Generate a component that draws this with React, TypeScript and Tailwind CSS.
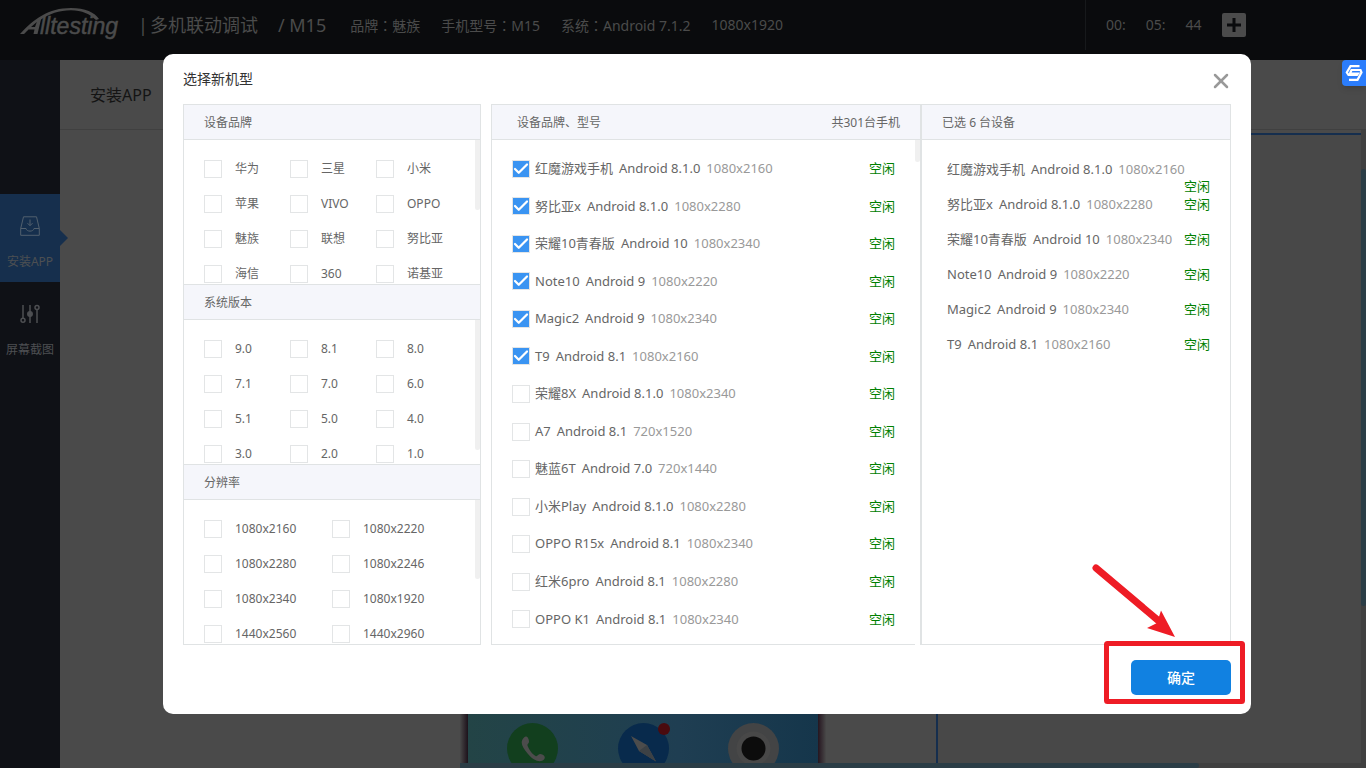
import { useState } from "react";
import { Check, X } from "lucide-react";

type Device = {
  name: string;
  system: string;
  resolution: string;
};

type FilterGroup = {
  title: string;
  options: string[];
  wide?: boolean;
  thumb: string;
};

const filterGroups: FilterGroup[] = [
  {
    title: "设备品牌",
    options: ["华为", "三星", "小米", "苹果", "VIVO", "OPPO", "魅族", "联想", "努比亚", "海信", "360", "诺基亚"],
    thumb: "h-[70px]",
  },
  {
    title: "系统版本",
    options: ["9.0", "8.1", "8.0", "7.1", "7.0", "6.0", "5.1", "5.0", "4.0", "3.0", "2.0", "1.0"],
    thumb: "h-[130px]",
  },
  {
    title: "分辨率",
    options: ["1080x2160", "1080x2220", "1080x2280", "1080x2246", "1080x2340", "1080x1920", "1440x2560", "1440x2960"],
    wide: true,
    thumb: "h-[79px]",
  },
];

const devices: Device[] = [
  { name: "红魔游戏手机", system: "Android 8.1.0", resolution: "1080x2160" },
  { name: "努比亚x", system: "Android 8.1.0", resolution: "1080x2280" },
  { name: "荣耀10青春版", system: "Android 10", resolution: "1080x2340" },
  { name: "Note10", system: "Android 9", resolution: "1080x2220" },
  { name: "Magic2", system: "Android 9", resolution: "1080x2340" },
  { name: "T9", system: "Android 8.1", resolution: "1080x2160" },
  { name: "荣耀8X", system: "Android 8.1.0", resolution: "1080x2340" },
  { name: "A7", system: "Android 8.1", resolution: "720x1520" },
  { name: "魅蓝6T", system: "Android 7.0", resolution: "720x1440" },
  { name: "小米Play", system: "Android 8.1.0", resolution: "1080x2280" },
  { name: "OPPO R15x", system: "Android 8.1", resolution: "1080x2340" },
  { name: "红米6pro", system: "Android 8.1", resolution: "1080x2280" },
  { name: "OPPO K1", system: "Android 8.1", resolution: "1080x2340" },
];

// The "A" is part of the swoosh, the rest of the name is set beside it.
function Logo() {
  return (
    <svg width="102" height="36" viewBox="0 0 102 36" role="img" aria-label="Alltesting">
      <path
        d="M0 27C14 12 28 1 51 1C65 1 75 5.500 79 12L76 13C70 7 62 3.200 51 3.200C39 3.200 29 7 21 12.500L17.500 27H13.500L14.500 22.500H8.500L4 27ZM11 20H15L16.800 15Z"
        fill="#4b4b4b"
      />
      <text
        x="20"
        y="27"
        fill="#4b4b4b"
        stroke="#4b4b4b"
        strokeWidth=".5"
        fontFamily="'Liberation Sans', sans-serif"
        fontSize="23"
        fontStyle="italic"
      >
        lltesting
      </text>
    </svg>
  );
}

// Full-width colon, set in the middle of its square.
function Colon() {
  return <span className="font-['Noto_Sans_CJK_TC',sans-serif]">：</span>;
}

function TopBar() {
  return (
    <header className="flex h-[60px] justify-between bg-[#0a0b0d] text-sm text-[#4b4b4b]">
      <div className="flex h-[50px] items-center pl-5">
        <Logo />
        <h1 className="ml-4 flex gap-5 text-lg whitespace-nowrap">
          <span className="flex">
            <span>|</span>
            <span className="ml-0.5">多机联动调试</span>
          </span>
          <span>/ M15</span>
        </h1>
        <div className="ml-6 flex gap-[21px] whitespace-nowrap">
          <span>品牌<Colon />魅族</span>
          <span>手机型号<Colon />M15</span>
          <span>系统<Colon />Android 7.1.2</span>
          <span>1080x1920</span>
        </div>
      </div>
      <div className="flex h-[50px] w-[281px] items-center gap-5 border-l border-[#17191b] pl-5">
        <span>00:</span>
        <span>05:</span>
        <span>44</span>
        <button type="button" aria-label="添加设备" className="grid size-6 place-items-center rounded-[2px] bg-[#4b4b4b]">
          <svg width="14" height="14" viewBox="0 0 14 14" stroke="#0a0b0d" strokeWidth="3">
            <path d="M7 0V14M0 7H14" />
          </svg>
        </button>
      </div>
    </header>
  );
}

function SideBar() {
  return (
    <nav className="w-[60px] shrink-0 bg-[#0f1116] pt-[134px] text-xs text-[#4d4f52]">
      <a href="#install" className="relative flex h-[88px] flex-col items-center gap-[17px] bg-[#162f4d] pt-[22px]">
        <svg className="shrink-0" width="20" height="20" viewBox="0 0 20 20" fill="none" stroke="#52606e">
          <path d="M3.5 .8H16.5L19.3 12.5V19.3H.7V12.5Z" />
          <path d="M.7 12.5H6C6.5 16 13.5 16 14 12.5H19.3M10 3.5V9.5M7.5 7.2L10 9.7L12.5 7.2" />
        </svg>
        <span className="leading-[18px] whitespace-nowrap">安装APP</span>
        <svg className="absolute top-9 left-full" width="8" height="16" viewBox="0 0 8 16" fill="#162f4d">
          <path d="M0 0L8 8L0 16Z" />
        </svg>
      </a>
      <a href="#screenshot" className="flex h-[88px] flex-col items-center gap-[17px] pt-[22px]">
        <svg className="shrink-0" width="20" height="20" viewBox="0 0 20 20" fill="none" stroke="#4d4f52" strokeWidth="1.5">
          <path d="M3 1V14M10 1V19M17 6V19" />
          <circle cx="3" cy="16.3" r="2" />
          <circle cx="10" cy="10" r="2.2" fill="#4d4f52" />
          <circle cx="17" cy="3.5" r="2" />
        </svg>
        <span className="leading-[18px] whitespace-nowrap">屏幕截图</span>
      </a>
    </nav>
  );
}

function PhoneDock() {
  return (
    <div className="flex h-10 justify-between overflow-hidden px-[39px]">
      <svg className="shrink-0" width="51" height="51" viewBox="0 0 51 51">
        <circle cx="25.5" cy="25.5" r="25.5" fill="#123f1e" />
        <path
          d="M17 14.5C19.5 12 21.5 14.5 22 18C22.3 20.5 20 20.5 20.5 22.5C21.5 26 25 31 28.5 33C30.5 34 31 31 33.5 31C37 31.5 39 34 37 36.5C33 40.5 26 37 21 31C15 24 12.5 19 17 14.5Z"
          fill="#4c4c4c"
        />
      </svg>
      <svg className="shrink-0 overflow-visible" width="51" height="51" viewBox="0 0 51 51">
        <circle cx="25.5" cy="25.5" r="25.5" fill="#082a4c" />
        <path d="M13 13L29 22L38 38.5L21 28Z" fill="#4c4c4c" />
        <path d="M25 25L29 22L38 38.5L21 28Z" fill="#3c4145" />
        <circle cx="46" cy="6" r="6" fill="#4a0b0f" />
      </svg>
      <svg className="shrink-0" width="51" height="51" viewBox="0 0 51 51">
        <circle cx="25.5" cy="25.5" r="25.5" fill="#434445" />
        <circle cx="25.5" cy="25.5" r="17" fill="#484848" />
        <circle cx="25.5" cy="25.5" r="12" fill="#0c0c0c" />
      </svg>
    </div>
  );
}

function Workspace() {
  return (
    <main className="flex min-w-0 flex-1 flex-col bg-[#4a4a4a]">
      <h2 className="flex h-[70px] items-center border-b border-[#404040] pl-[30px] text-base text-[#141414]">
        安装APP
      </h2>
      <div className="flex flex-1">
        <div className="flex min-w-0 flex-1 flex-col">
          <div className="flex flex-1">
            <div className="ml-[400px] flex">
              <div className="w-2 bg-linear-to-r from-[#484848] to-[#1d121b]" />
              <div className="flex w-[350px] flex-col justify-end bg-linear-to-r from-[#234446] via-[#1f3e52] via-60% to-[#15364b]">
                <PhoneDock />
              </div>
              <div className="w-2 bg-linear-to-r from-[#251620] to-[#484848]" />
            </div>
            <div className="mt-[3px] ml-[110px] flex-1 border-t-2 border-l-2 border-[#152e4e] bg-[#484848]" />
          </div>
          <div className="ml-[400px] h-[5px] bg-[#404040]">
            <div className="h-full w-[82%] rounded-r-sm bg-[#2b3d46]" />
          </div>
        </div>
        <div className="w-[5px] bg-[#404040] pt-[39px]">
          <div className="h-[437px] rounded-sm bg-[#2b3d46]" />
        </div>
      </div>
    </main>
  );
}

function CheckBox({ checked, onChange }: { checked?: boolean; onChange?: () => void }) {
  return (
    <span className="grid size-[18px] shrink-0 place-items-center">
      <input
        type="checkbox"
        checked={checked}
        onChange={onChange}
        className="col-start-1 row-start-1 size-[18px] appearance-none border border-[#e3e5e6] bg-white checked:bg-[#3a94f2]"
      />
      {checked ? (
        <Check size={18} strokeWidth={3} className="pointer-events-none z-10 col-start-1 row-start-1 text-white" />
      ) : null}
    </span>
  );
}

function FilterSection({ group }: { group: FilterGroup }) {
  return (
    <section className="border-t border-[#e0e3e4]">
      <h3 className="flex h-[35px] items-center border-b border-[#e0e3e4] bg-[#f5f6fb] pt-0.5 pl-5">{group.title}</h3>
      <div className="flex h-36 justify-between overflow-hidden">
        <div
          className={
            group.wide
              ? "grid auto-rows-[35px] grid-cols-[128px_128px] pt-[11px] pl-5"
              : "grid auto-rows-[35px] grid-cols-[86px_86px_86px] pt-[11px] pl-5"
          }
        >
          {group.options.map((option) => (
            <FilterOption key={option} label={option} />
          ))}
        </div>
        <div className={`w-[5px] shrink-0 rounded-b-sm bg-[#f0f0f0] ${group.thumb}`} />
      </div>
    </section>
  );
}

function FilterOption({ label }: { label: string }) {
  const [checked, setChecked] = useState(false);

  return (
    <label className="flex items-center gap-[13px] whitespace-nowrap">
      <CheckBox checked={checked} onChange={() => setChecked(!checked)} />
      {label}
    </label>
  );
}

function DeviceText({ device }: { device: Device }) {
  return (
    <span className="flex gap-1.5 whitespace-nowrap">
      <span>{device.name}</span>
      <span>{device.system}</span>
      <span className="text-[#999999]">{device.resolution}</span>
    </span>
  );
}

function Annotation() {
  return (
    <svg
      className="pointer-events-none absolute right-[5px] bottom-[9px]"
      width="156"
      height="143"
      viewBox="0 0 156 143"
      fill="none"
      aria-hidden="true"
    >
      <rect x="16.5" y="81.5" width="136" height="58" rx="1" stroke="#ee1c25" strokeWidth="5" />
      <path d="M6 6L70 60" stroke="#ee1c25" strokeWidth="7" strokeLinecap="round" />
      <path d="M85 75L57 66L67 61L71 48.5Z" fill="#ee1c25" />
    </svg>
  );
}

function DeviceDialog() {
  const [selected, setSelected] = useState<string[]>(devices.slice(0, 6).map((device) => device.name));

  function toggle(name: string) {
    setSelected((current) =>
      current.includes(name) ? current.filter((item) => item !== name) : [...current, name],
    );
  }

  const picked = devices.filter((device) => selected.includes(device.name));

  return (
    <div role="dialog" aria-label="选择新机型" className="relative w-full rounded-[10px] bg-white text-[#666666]">
      <div className="flex h-[50px] items-center justify-between pr-[18px] pl-5">
        <h2 className="text-sm text-[#333333]">选择新机型</h2>
        <button type="button" aria-label="关闭" className="pt-1 text-[#999999]">
          <X size={24} strokeWidth={2.5} />
        </button>
      </div>

      <div className="flex px-5 text-xs">
        <div className="w-[298px] shrink-0 border-x border-b border-[#e0e3e4]">
          {filterGroups.map((group) => (
            <FilterSection key={group.title} group={group} />
          ))}
        </div>

        <section className="ml-2.5 flex min-w-0 flex-1 flex-col border-t border-r border-l border-[#e0e3e4]">
          <div className="flex h-[35px] items-center justify-between border-b border-[#e0e3e4] bg-[#f5f6fb] pt-0.5 pr-5 pl-[25px]">
            <h3>设备品牌、型号</h3>
            <span>共301台手机</span>
          </div>
          <div className="flex flex-1">
            <ul className="grid flex-1 grid-rows-13 border-b border-[#e0e3e4] pt-2.5 pr-5 pb-1.5 pl-5 text-[13px]">
              {devices.map((device) => (
                <li key={device.name} className="flex items-center justify-between">
                  <label className="flex items-center gap-[5px]">
                    <CheckBox checked={selected.includes(device.name)} onChange={() => toggle(device.name)} />
                    <DeviceText device={device} />
                  </label>
                  <span className="text-[#008000]">空闲</span>
                </li>
              ))}
            </ul>
            <div className="h-[22px] w-[5px] rounded-b-sm bg-[#f0f0f0]" />
          </div>
        </section>

        <section className="w-[310px] shrink-0 border border-[#e0e3e4]">
          <h3 className="flex h-[35px] items-center border-b border-[#e0e3e4] bg-[#f5f6fb] pt-0.5 pl-5">
            已选 {picked.length} 台设备
          </h3>
          <ul className="pt-[21px] pr-5 pl-[25px] text-[13px] leading-[17px]">
            {picked.map((device) => (
              <li key={device.name} className="flex h-[35px] flex-wrap content-start justify-between gap-x-2">
                <DeviceText device={device} />
                <span className="ml-auto text-[#008000]">空闲</span>
              </li>
            ))}
          </ul>
        </section>
      </div>

      <div className="flex justify-end px-5 pt-[15px] pb-[19px]">
        <button type="button" className="h-[35px] w-[100px] rounded-[5px] bg-[#1181e1] text-sm font-medium text-white">
          确定
        </button>
      </div>
      <Annotation />
    </div>
  );
}

export default function App() {
  return (
    <div className="flex min-h-screen flex-col font-['Noto_Sans','Noto_Sans_CJK_SC',sans-serif]">
      <TopBar />
      <div className="flex flex-1">
        <SideBar />
        <Workspace />
      </div>

      <div className="fixed inset-0 overflow-auto pt-[54px] pr-[115px] pl-[163px]">
        <DeviceDialog />
      </div>

      <button
        type="button"
        aria-label="快捷工具"
        className="fixed top-[60px] right-0 grid h-[26px] w-6 place-items-center rounded-l-sm bg-[#2b7dfc] shadow-md"
      >
        <svg width="18" height="18" viewBox="0 0 18 18" fill="none" stroke="#ffffff" strokeWidth="2.2">
          <path d="M14.5 2.2H5.5L1.8 8.5L3.5 11H12L13 9.5H5L6.5 6H15.5L16.5 8.5L12.5 15.8H4" />
        </svg>
      </button>
    </div>
  );
}
